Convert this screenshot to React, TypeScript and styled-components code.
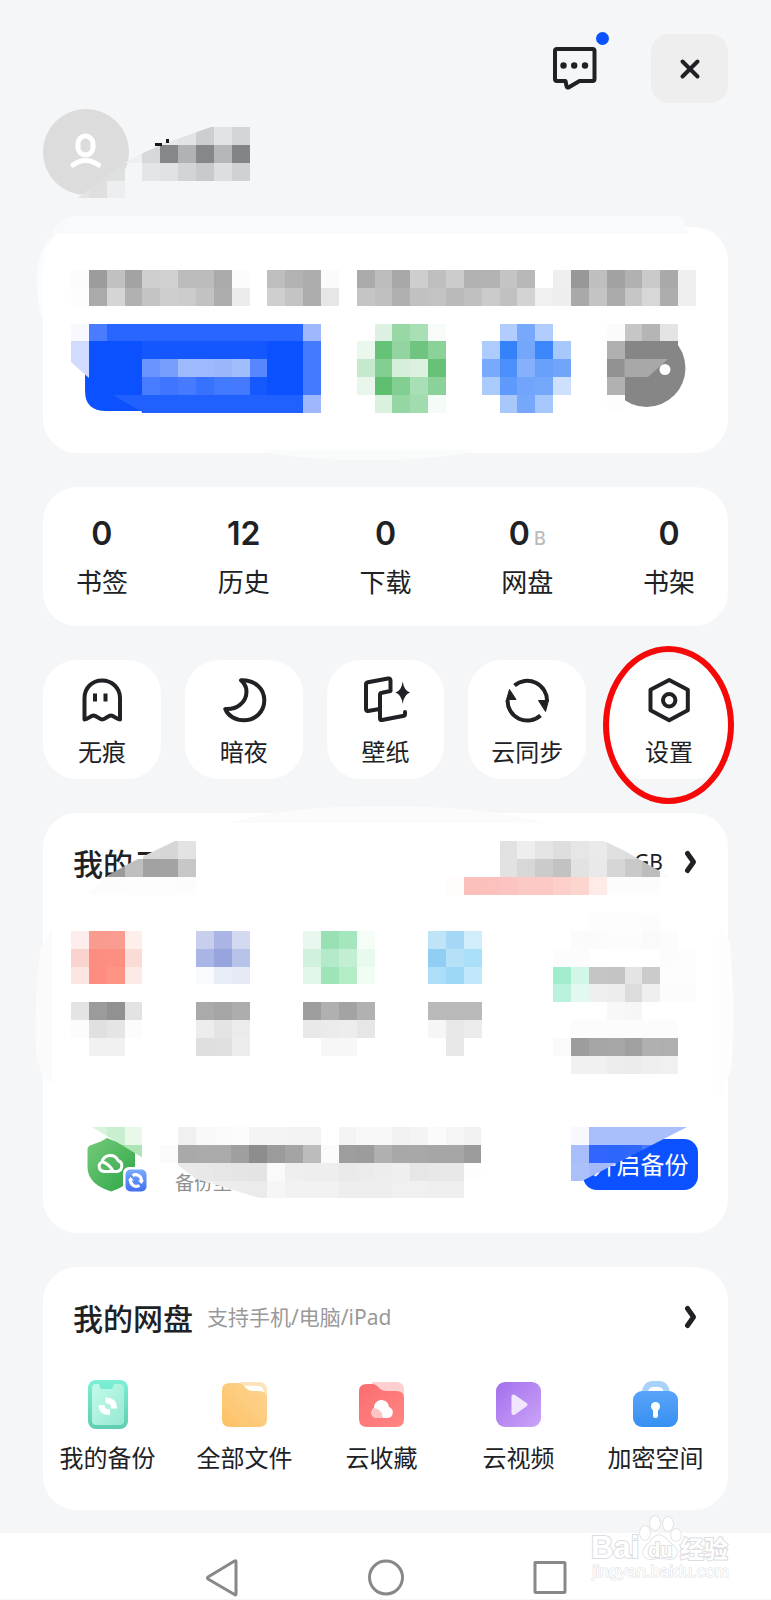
import React from "react";
import styled, { createGlobalStyle } from "styled-components";

const ink = "#202124";
const blue = "#0b51ff";

const GlobalStyle = createGlobalStyle`
  *, *::before, *::after { box-sizing: border-box; }
  body {
    margin: 0;
    background: #f4f6f8;
    color: ${ink};
    font-family: "Noto Sans", "Noto Sans CJK SC", sans-serif;
  }
  button { border: 0; padding: 0; margin: 0; background: none; color: inherit; font: inherit; cursor: pointer; }
  a { color: inherit; text-decoration: none; }
  h2, p { margin: 0; font-weight: 400; }
  svg { display: block; flex: none; overflow: visible; }
`;

/* ---------- layout ---------- */

const Screen = styled.div`
  position: relative;
  display: flex;
  flex-direction: column;
  overflow: hidden;
`;

const Content = styled.main`
  display: flex;
  flex-direction: column;
  gap: 34px;
  padding: 34px 43px 23px;
`;

const Header = styled.header`
  display: flex;
  flex-direction: column;
  gap: 6px;
  margin-bottom: -2px;
`;

const TopBar = styled.div`
  display: flex;
  align-items: center;
  justify-content: flex-end;
  gap: 54px;
`;

const MessageButton = styled.button`
  position: relative;
`;

const UnreadDot = styled.span`
  position: absolute;
  top: -15px;
  right: -12px;
  width: 13px;
  height: 13px;
  border-radius: 50%;
  background: ${blue};
`;

const CloseButton = styled.button`
  display: grid;
  place-items: center;
  width: 77px;
  height: 69px;
  border-radius: 18px;
  background: #eeeeee;
`;

const Profile = styled.div`
  position: relative;
  display: flex;
`;

const Avatar = styled.div`
  width: 86px;
  height: 86px;
  border-radius: 50%;
  background: #dcdcdc;
`;

const Cover = styled.div<{ $x: number; $y: number }>`
  position: absolute;
  left: ${(p) => p.$x}px;
  top: ${(p) => p.$y}px;
  pointer-events: none;
`;

const RightCover = styled(Cover)`
  left: auto;
  right: ${(p) => p.$x}px;
`;

const Card = styled.section<{ $pad: string }>`
  position: relative;
  border-radius: 34px;
  background: #ffffff;
  padding: ${(p) => p.$pad};
`;

const Columns = styled.div<{ $gap?: number }>`
  display: grid;
  grid-template-columns: repeat(5, 1fr);
  gap: ${(p) => p.$gap ?? 0}px;
`;

const Stat = styled.a`
  display: flex;
  flex-direction: column;
  align-items: center;
  gap: 10px;
`;

const StatValue = styled.span`
  display: flex;
  align-items: baseline;
  gap: 4px;
  height: 40px;
  font-family: Inter, "Noto Sans", sans-serif;
  font-size: 32px;
  line-height: 40px;
  font-weight: 600;
`;

const Unit = styled.small`
  font-size: 18px;
  line-height: 20px;
  font-weight: 500;
  color: #bbbbbb;
`;

const StatLabel = styled.span`
  font-size: 26px;
  line-height: 36px;
`;

const Tile = styled.button`
  position: relative;
  display: flex;
  flex-direction: column;
  align-items: center;
  gap: 12px;
  height: 119px;
  padding-top: 18px;
  border-radius: 34px;
  background: #ffffff;
`;

const Label = styled.span`
  font-size: 24px;
  line-height: 36px;
  white-space: nowrap;
`;

const Ring = styled.span`
  position: absolute;
  z-index: 1;
  top: -14px;
  left: 50%;
  width: 131px;
  height: 158px;
  margin-left: -66px;
  border: 6px solid #f50808;
  border-radius: 50%;
  pointer-events: none;
`;

const CardHead = styled.div`
  position: relative;
  display: flex;
  align-items: center;
  height: 40px;
`;

const Title = styled.h2`
  font-size: 30px;
  line-height: 40px;
  font-weight: 500;
`;

const CloudHead = styled(CardHead)`
  padding-left: 2px;
`;

const Hint = styled.span`
  margin: 0 0 4px 14px;
  font-size: 21px;
  line-height: 32px;
  color: #999999;
`;

const Quota = styled.span`
  margin: 0 0 4px auto;
  font-size: 21px;
  line-height: 32px;
`;

const More = styled.a<{ $gap?: number }>`
  margin: 0 2px 4px ${(p) => (p.$gap ? `${p.$gap}px` : "auto")};
`;

const Services = styled.div`
  margin: 29px 2px 0 0;
`;

const BackupRow = styled.div`
  position: relative;
  display: flex;
  align-items: center;
  height: 76px;
  margin-top: 53px;
  padding-left: 16px;
`;

const BackupNote = styled.p`
  align-self: flex-end;
  margin-left: 28px;
  font-size: 19px;
  line-height: 40px;
  color: #8f8f8f;
`;

const BackupButton = styled.button`
  margin-left: auto;
  width: 115px;
  height: 51px;
  border-radius: 14px;
  background: ${blue};
  color: #ffffff;
  font-size: 24px;
  line-height: 36px;
`;

const DriveHead = styled(CardHead)`
  padding: 0 30px;
`;

const DriveItem = styled.a`
  display: flex;
  flex-direction: column;
  align-items: center;
  gap: 10px;
`;

const DriveGrid = styled(Columns)`
  margin: 41px 4px 0 -4px;
`;

const NavBar = styled.nav`
  display: flex;
  justify-content: center;
  gap: 124px;
  height: 66px;
  padding-top: 23px;
  background: #ffffff;
`;

const Watermark = styled.div`
  position: absolute;
  right: 40px;
  bottom: 12px;
  pointer-events: none;
`;

/* ---------- pixel mosaics ---------- */

const CELL = 125 / 7;

/* Each row lists cell colours; "." is an empty cell and "colour*n" repeats. */
function expand(row: string): string[] {
  return row
    .trim()
    .split(/\s+/)
    .flatMap((token) => {
      const [value, count] = token.split("*");
      return Array<string>(Number(count ?? 1)).fill(value);
    });
}

type MosaicProps = {
  id: string;
  cols: number;
  rows: string[];
  clip?: string;
  fluid?: boolean;
  under?: React.ReactNode;
  over?: React.ReactNode;
};

function Mosaic({ id, cols, rows, clip, fluid, under, over }: MosaicProps) {
  const w = cols * CELL;
  const h = rows.length * CELL;
  return (
    <svg width={fluid ? "100%" : w} height={fluid ? undefined : h} viewBox={`0 0 ${w} ${h}`} aria-hidden="true">
      {clip && (
        <clipPath id={id}>
          <polygon points={clip} />
        </clipPath>
      )}
      {under}
      <g shapeRendering="crispEdges" clipPath={clip ? `url(#${id})` : undefined}>
        {rows.map((row, y) =>
          expand(row).map((c, x) =>
            c === "." ? null : (
              <rect key={`${x}-${y}`} x={x * CELL} y={y * CELL} width={CELL} height={CELL} fill={`#${c}`} />
            )
          )
        )}
      </g>
      {over}
    </svg>
  );
}

const nameRows = [
  ". . . . . e6e7e9 e2e3e5 cdced1 e2e3e5 d3d5d7",
  ". . . eeeff1 d7d8da 868788 b1b2b4 868788 b6b7b9 838485",
  ". dededf dedfdf . e4e5e7 e1e2e3 d3d4d6 c9cacc dddee0 cfd1d3",
  "e3e4e5 dfdfdf edeeef",
];

const memberRows = [
  "fcfcfc 9c9c9c c1c1c1 a3a3a3 cfcfcf d1d1d1 bcbcbc*2 aaaaaa fcfcfc . bebebe b3b3b3 adadad fbfbfb . aaaaaa bdbdbd a8a8a8 cecece bfbfbf cccccc b2b2b2 b3b3b3 c4c4c4 b8b8b8 . efefef 989898 bfbfbf a2a2a2 b1b1b1 cacaca a9a9a9 efefef",
  "fdfdfd aaaaaa d5d5d5 b1b1b1 c4c4c4 cecece cccccc c2c2c2 adadad ebebeb . cfcfcf c4c4c4 adadad e6e6e6 . c5c5c5 c0c0c0 b0b0b0 c1c1c1 c3c3c3 bababa c0c0c0 cbcbcb c1c1c1 d3d3d3 f0f0f0 eeeeee a9a9a9 c4c4c4 aaaaaa c6c6c6 d7d7d7 adadad efefef",
  ".",
  "f8f9fe 4a7cff 2966ff*11 9fb8fd . . . dcf1e1 97d8a4 a9dfb5 f7fcf9 . . . b0cdfd 77a8fb b0cdfd . . . fbfbfb c6c6c6 b5b5b5 e4e4e4",
  ". 0b51ff*3 1557ff*7 0b51ff*2 447aff . . eaf7ed 66c277 93d4a1 6fc580 8bd299 . . adccfd 3482f9 74a7fb 3c86fb a6c8fb . . b0b0b0 868686*3",
  ". 0b51ff*3 6a94fe 769efd 9fbafc*2 9bb7fb a2bdfb 5886fe 0b51ff*2 447aff . . c5e9cd 82cf91 d5efdb dcf1e0 65c277 . . 78a9fc 4b8ffa 85b1fc 68a1fb 71a5fb . . 919191",
  ". 0b51ff*3 487dff 4076ff 477bff 3672fe 417afe 467afe 1558fe 0b51ff*2 447aff . . e8f6ec 5fbf71 82cf91 a9dfb4 8ad299 . . accbfd 5e9afb 70a5fb 75a8fb cee0fe . . b1b1b1",
  ".*4 1f60ff*9 9fb8fd . . . daf1df 95d7a3 a1dcae f5fcf7 . . . a8c8fb 75a7fb a6c7fb . . . fdfdfd",
];

const serviceRows = [
  ".*29 fdfdfd*3 fcfcfc",
  "fdeded fa9b8f fb9c90 feeeec .*3 c8cfec aab5e5 d3d9f1 .*3 e9f8ef 99e0b3 a6e6bf f5fdf7 .*3 bfe4f7 a5d8f7 d1edfb .*5 fbfbfb*2 fcfcfc*2 fafafa fcfcfc",
  "fad3ce fd8d80 fd8f80 fbdbd6 .*3 a9b5e4 98a4de b8c3ea .*3 d0f1de b3eac9 c2efd2 e8f9ed .*3 91cef4 b4e0f8 a9dff9 .*4 fcfcfc*2 .*4 fcfcfc fdfdfd",
  "fbe6e3 fe8c80 fd9484 fdeae7 .*3 f8fafe e9edf8 e6eaf7 .*3 e3f6ea 9fe4b7 b3edc5 f1fcf5 .*3 addef8 9ed8f7 c1e8fa .*4 a0eccd d1f7e6 c5c5c5 c3c3c3 e4e4e4 cbcbcb fdfdfd*2",
  ".*27 baf2de e1f9f0 efefef ededed dcdcdc efefef fcfcfc*2",
  "e4e4e4 9b9b9b 919191 e3e3e3 .*3 aaaaaa a5a5a5 adadad .*3 9e9e9e b0b0b0 a3a3a3 b1b1b1 .*3 b9b9b9*3 .*7 f8f8f8 f6f6f6",
  "fcfcfc e0e0e0 e5e5e5 fcfcfc .*3 ededed e4e4e4 ebebeb .*3 e9e9e9 ebebeb ededed e6e6e6 .*3 f6f6f6 e8e8e8 ebebeb .*5 fcfcfc*6",
  ". f1f1f1*2 .*4 dfdfdf e0e0e0 ededed .*4 f7f7f7*2 .*5 e8e8e8 .*5 fafafa 9d9d9d a5a5a5 a7a7a7 a0a0a0 b0b0b0 afafaf",
  ".*28 f1f1f1*2 ededed ebebeb efefef f0f0f0",
];

const titleRows = [
  ". . . d8d8d8 d6d6d6 e3e3e3",
  ". 9a9a9a bfbfbf a2a2a2 a3a3a3 c7c7c7",
  "fcfcfc*2 fdfdfd*3 fcfcfc",
];

const quotaRows = [
  ".*3 e1e1e1 eeeeee e5e5e5 dedede e6e6e6 eaeaea e0e0e0 dddddd e0e0e0",
  ".*3 e2e2e2 d7d7d7 cbcbcb c2c2c2 e2e2e2 e9e9e9 d6d6d6 c9c9c9 bdbdbd fafafa",
  "fffcfb fcc0bc fcc1bd fcc4c0 fcc8c4*2 fccfca fdd5cf feebe8 fcfcfc*3",
];

const backupRows = [
  ". f0f0f0 f9f9f9 fafafa fcfcfc f4f4f4*2 f3f3f3*2 . f4f4f4 f8f8f8*2 f2f2f2 f4f4f4 fbfbfb f5f5f5 f2f2f2",
  "fbfbfb a9a9a9 aaaaaa*2 9f9f9f 8d8d8d 9b9b9b a4a4a4 bcbcbc fbfbfb 9e9e9e 9c9c9c b0b0b0 a8a8a8*2 a6a6a6*2 9b9b9b",
  ". e9e9e9 e8e8e8 e6e6e6 e5e5e5 e4e4e4 fafafa efefef eeeeee*2 eaeaea ebebeb ededed efefef e6e6e6 e8e8e8*2 fdfdfd",
  ". . f0f0f0 ededed ececec ebebeb f6f6f6 f2f2f2*3 eeeeee*3 f0f0f0*2 efefef*2",
];

const shieldRows = ["d7f3db*2 c8efcf e8f9ea", "c5eecb*2 9fdfa6 aee5b4"];

const actionRows = [
  "f7f9fe a9bffb*6",
  "a7bdfc 3066fe 2d66fb 3068fb 4a7bfb 3f72fb",
  "acc1fc a3b9fb a9bcfb a3b9fb",
];

/* ---------- icons ---------- */

const line = { fill: "none", stroke: ink, strokeWidth: 4, strokeLinejoin: "round", strokeLinecap: "round" } as const;

const tools: { name: string; marked?: boolean; art: React.ReactNode }[] = [
  {
    name: "无痕",
    art: (
      <>
        <path {...line} d="M4.500 41.500V20C4.500 10 12 2.500 22 2.500S40 10 40 20V41.500C36.500 41.500 34 37.500 31 37.500C28 37.500 25.500 41.500 22.300 41.500S16.500 37.500 13.500 37.500C10.500 37.500 8 41.500 4.500 41.500Z" />
        <path fill={ink} d="M13 15.500h4v8h-4zM23.500 15.500h4v8h-4z" />
      </>
    ),
  },
  {
    name: "暗夜",
    art: <path {...line} d="M19 2.300C33 1.700 42.300 11 42.300 22.300S33.500 42.300 22 42.300C13.500 42.300 6 38 3.300 31C14 32 24.500 25 24.500 13.500C24.500 9 22 5 19 2.300Z" />,
  },
  {
    name: "壁纸",
    art: (
      <>
        <path {...line} d="M16.500 31L5 33Q3 33.300 3 31V6.500Q3 4.700 5 4.300L25 .5Q27.500 0 27.500 2.500V13L19 14.700Q17 15 17 17V40.500Q17 42.500 19 42L41 37.700Q42 37.500 42 36V34" />
        <path fill={ink} d="M39.700 3.500Q41 12.500 47 14.500Q41 16.500 39.700 26Q38.500 16.500 32.500 14.500Q38.500 12.500 39.700 3.500Z" />
      </>
    ),
  },
  {
    name: "云同步",
    art: (
      <>
        <path {...line} strokeLinecap="butt" d="M9.500 7.500A19.700 19.700 0 0 1 42 23M35.500 37.500A19.700 19.700 0 0 1 2.600 22" />
        <path fill={ink} stroke={ink} strokeLinejoin="round" d="M33.500 22.500H43.500L40.500 33.500ZM11 21.500H1.500L4.500 11.500Z" />
      </>
    ),
  },
  {
    name: "设置",
    marked: true,
    art: (
      <>
        <path {...line} d="M22.200 2L40.800 11.800V32.200L22.200 42.200L3.500 32.200V11.800Z" />
        <circle {...line} cx="22.200" cy="22.200" r="6.200" />
      </>
    ),
  },
];

const driveItems: { name: string; art: React.ReactNode }[] = [
  {
    name: "我的备份",
    art: (
      <>
        <linearGradient id="phone" x2="0" y2="1">
          <stop stopColor="#7cf0d5" />
          <stop offset="1" stopColor="#5fcdb0" />
        </linearGradient>
        <linearGradient id="glass" x2="1" y2="1">
          <stop stopColor="#c4faeb" />
          <stop offset="1" stopColor="#96e8d2" />
        </linearGradient>
        <rect x="5" width="40" height="49" rx="8" fill="url(#phone)" />
        <path fill="url(#glass)" d="M13 4H16Q17 9 19 9H28Q30 9 31 4H37Q41 4 41 8V41Q41 45 37 45H13Q9 45 9 41V8Q9 4 13 4Z" />
        <path fill="none" stroke="#fff" strokeWidth="6" d="M22.500 20.500Q31 20 31 28.500M18.500 25Q18.500 32.500 27 32" />
      </>
    ),
  },
  {
    name: "全部文件",
    art: (
      <>
        <linearGradient id="folder" x1="1" x2="0" y2="1">
          <stop stopColor="#fcd593" />
          <stop offset="1" stopColor="#fec165" />
        </linearGradient>
        <path fill="#fde4bd" d="M20 2H39Q47 2 47 10V24H20Z" />
        <path fill="#fff" d="M24 6H38Q43 6 44 12H28Z" />
        <path fill="url(#folder)" d="M10 3H18Q22 3 25 7Q28 11 33 11H39Q47 11 47 18V39Q47 47 39 47H10Q2 47 2 39V10Q2 3 10 3Z" />
      </>
    ),
  },
  {
    name: "云收藏",
    art: (
      <>
        <linearGradient id="fav" x2="1" y2="1">
          <stop stopColor="#fb6d71" />
          <stop offset="1" stopColor="#ff8683" />
        </linearGradient>
        <path fill="#fdd0cf" d="M15 2H39Q47 2 47 10V24H15Z" />
        <path fill="url(#fav)" d="M10 4H15Q19 4 22 8Q25 11 30 11H39Q47 11 47 18V39Q47 47 39 47H10Q2 47 2 39V11Q2 4 10 4Z" />
        <path fill="#fff" d="M19 38A5.500 5.500 0 0 1 17 28A7.500 7.500 0 0 1 32 27A5.700 5.700 0 0 1 31 38Z" />
        <path fill="#fdc4c5" d="M26 38Q25 29 17 28A5.500 5.500 0 0 0 19 38Z" />
      </>
    ),
  },
  {
    name: "云视频",
    art: (
      <>
        <linearGradient id="video" x2="1" y2="1">
          <stop stopColor="#a36fec" />
          <stop offset="1" stopColor="#cba4f8" />
        </linearGradient>
        <rect x="2" y="2" width="45" height="45" rx="9" fill="url(#video)" />
        <path fill="#f1e6fd" stroke="#f1e6fd" strokeWidth="4" strokeLinejoin="round" d="M19.500 16.500V33L31.500 24.700Z" />
      </>
    ),
  },
  {
    name: "加密空间",
    art: (
      <>
        <linearGradient id="safe" x2="0" y2="1">
          <stop stopColor="#59a4fb" />
          <stop offset="1" stopColor="#3690f0" />
        </linearGradient>
        <path fill="none" stroke="#a8d1fb" strokeWidth="6" d="M13.500 14Q14.500 4 22 4H28Q35 4 36 14" />
        <rect x="2" y="11" width="45" height="36" rx="9" fill="url(#safe)" />
        <path fill="none" stroke="#fff" strokeWidth="5" strokeLinecap="round" d="M24.500 27V35.500" />
        <circle cx="24.500" cy="26.500" r="4.500" fill="#fff" />
      </>
    ),
  },
];

const stats = [
  { name: "书签", value: "0" },
  { name: "历史", value: "12" },
  { name: "下载", value: "0" },
  { name: "网盘", value: "0", unit: "B" },
  { name: "书架", value: "0" },
];

function Chevron() {
  return (
    <svg width="11" height="22" aria-hidden="true">
      <path {...line} strokeWidth="5" d="M2.500 2.500L8.500 11L2.500 19.500" />
    </svg>
  );
}

function BackupShield() {
  return (
    <svg width="60" height="56" viewBox="0 0 60 56" aria-hidden="true">
      <linearGradient id="shield" x2="1" y2="1">
        <stop stopColor="#76cb7b" />
        <stop offset="1" stopColor="#2ca545" />
      </linearGradient>
      <linearGradient id="badge" x2="0" y2="1">
        <stop stopColor="#78aafd" />
        <stop offset="1" stopColor="#416ff0" />
      </linearGradient>
      <path fill="url(#shield)" d="M20 1Q24 3 46 10Q48 11 48 13V28Q48 47 24 54.500Q.5 47 .5 30V12Q.5 9.500 3 8.500Q16 4 20 1Z" />
      <path fill="none" stroke="#fff" strokeWidth="3" strokeLinejoin="round" d="M17 34.500A5 5 0 0 1 15 25A8.500 8.500 0 0 1 31 23.500A5.700 5.700 0 0 1 30 34.500ZM16 25Q22 27 26 34" />
      <rect x="36" y="30" width="26" height="27" rx="6" fill="#fff" />
      <rect x="38.500" y="32.500" width="21" height="22" rx="5" fill="url(#badge)" />
      <path fill="none" stroke="#fff" strokeWidth="3" d="M45.500 38.500A6 6 0 0 1 54.500 44M52.500 48.500A6 6 0 0 1 43.500 43" />
      <path fill="#fff" d="M51 43.500H57L54.500 47ZM41 43.500H47L43.500 40Z" />
    </svg>
  );
}

function Watermarks() {
  const outline = { fill: "#fff", stroke: "#dcdddf", strokeWidth: 2, paintOrder: "stroke" } as const;
  return (
    <svg width="140" height="72" viewBox="0 0 140 72" role="img" aria-label="Baidu 经验">
      <g {...outline} strokeWidth="1.500">
        <ellipse cx="54" cy="18" rx="5" ry="7" />
        <ellipse cx="64" cy="8" rx="5" ry="7" />
        <ellipse cx="77" cy="9" rx="5" ry="7" />
        <ellipse cx="85" cy="20" rx="5" ry="6" />
        <path d="M68 20Q72 20 78 27Q87 33 86 39Q84 45 77 44Q69 42 62 44Q53 45 52 38Q52 33 59 27Q64 20 68 20Z" />
      </g>
      <g {...outline} fontFamily="Liberation Sans, sans-serif" fontWeight="700">
        <text x="0" y="43" fontSize="31">Bai</text>
        <text x="57" y="42" fontSize="20">du</text>
        <text x="89" y="43" fontSize="24" fontFamily="Noto Sans CJK SC, sans-serif">经验</text>
      </g>
      <text {...outline} strokeWidth="1" x="1" y="62" fontSize="17" fontFamily="Liberation Sans, sans-serif">jingyan.baidu.com</text>
    </svg>
  );
}

/* ---------- page ---------- */

export default function App() {
  return (
    <Screen>
      <GlobalStyle />
      <Content>
        <Header>
          <TopBar>
            <MessageButton aria-label="消息">
              <svg width="44" height="43" aria-hidden="true">
                <path {...line} d="M4 2H39.500Q41.500 2 41.500 4V32Q41.500 34 39.500 34H26.500L15.500 40.500Q14 41 13.500 39L12.500 34H4Q2 34 2 32V4Q2 2 4 2Z" />
                <g fill={ink}>
                  <circle cx="10.500" cy="18.500" r="3.200" />
                  <circle cx="21.200" cy="18.500" r="3.200" />
                  <circle cx="32" cy="18.500" r="3.200" />
                </g>
              </svg>
              <UnreadDot />
            </MessageButton>
            <CloseButton aria-label="关闭">
              <svg width="20" height="20" aria-hidden="true">
                <path {...line} d="M2.500 2.500L17.500 17.500M17.500 2.500L2.500 17.500" />
              </svg>
            </CloseButton>
          </TopBar>
          <Profile>
            <Avatar>
              <svg width="86" height="86" aria-hidden="true">
                <g fill="none" stroke="#fff" strokeWidth="5" strokeLinecap="round">
                  <rect x="35" y="27" width="15" height="19" rx="7.500" />
                  <path d="M30 56Q42.500 47 55.500 56" />
                </g>
              </svg>
            </Avatar>
            <Cover $x={28} $y={18}>
              <Mosaic
                id="name"
                cols={10}
                rows={nameRows}
                clip="140,0 179,0 179,54 54,54 54,72 5,72 55,35 72,26 92,17"
                over={<path fill="#17181a" d="M84 16h7v3h-7zM95 12h3v4h-3z" />}
              />
            </Cover>
          </Profile>
        </Header>

        <Card $pad="43px 32px 40px 28px">
          <Cover $x={0} $y={0}>
            <svg width="685" height="226" aria-hidden="true">
              <path fill="#f9fafc" d="M17 -4Q24 -11 36 -11H634Q642 -10 642 0L646 7H9Q10 2 17 -4Z" />
              <path fill="#fbfcfd" d="M9 7Q-6 25 -6 52T0 92V60Q0 20 9 7Z" />
              <path fill="#fafbfb" d="M215 223H436Q400 233 325 233T215 223Z" />
            </svg>
          </Cover>
          <Mosaic
            id="member"
            cols={35}
            rows={memberRows}
            fluid
            under={
              <>
                <path fill={blue} d="M14 104V121Q14 141 35 141H73V104Z" />
                <path fill="#1f60ff" d="M42 125H73V143Z" />
                <path fill="#cfdcfd" d="M0 71H18V108L0 92Z" />
                <circle cx="575.500" cy="98" r="39" fill="#868686" />
              </>
            }
            over={
              <>
                <path fill="#a8a8a8" d="M553.500 89H597L577 107H553.500Z" />
                <circle cx="594" cy="99.500" r="5.500" fill="#fff" />
              </>
            }
          />
        </Card>

        <Card $pad="27px 0 26px">
          <Columns $gap={24}>
            {stats.map((s) => (
              <Stat key={s.name} href="#">
                <StatValue>
                  {s.value}
                  {s.unit && <Unit>{s.unit}</Unit>}
                </StatValue>
                <StatLabel>{s.name}</StatLabel>
              </Stat>
            ))}
          </Columns>
        </Card>

        <Columns $gap={24}>
          {tools.map((t) => (
            <Tile key={t.name}>
              <svg width="44" height="44" aria-hidden="true">{t.art}</svg>
              <Label>{t.name}</Label>
              {t.marked && <Ring />}
            </Tile>
          ))}
        </Columns>

        <Card $pad="31px 30px 30px 28px">
          <Cover $x={0} $y={0}>
            <svg width="685" height="420" aria-hidden="true">
              <path fill="#fbfbfc" d="M187 10Q240 -7 340 -7T503 10Z" />
              <path fill="#fbfbfc" d="M9 115L-2 135Q-9 180 -7 240Q-5 255 2 265L9 270Z" />
              <path fill="#fdfdfd" d="M676 115L687 130Q692 180 689 250Q688 262 676 285Z" />
            </svg>
          </Cover>
          <CloudHead>
            <Title>我的云</Title>
            <Quota>GB</Quota>
            <More href="#" $gap={22} aria-label="查看更多">
              <Chevron />
            </More>
            <Cover $x={18} $y={-3}>
              <Mosaic id="title" cols={6} rows={titleRows} clip="86,0 107,0 107,54 -4,54 18,35 41,22 61,12" />
            </Cover>
            <RightCover $x={20} $y={-3}>
              <Mosaic id="quota" cols={13} rows={quotaRows} clip="0,0 158,0 177,9 224,36 213,54 0,54" />
            </RightCover>
          </CloudHead>
          <Services>
            <Mosaic id="services" cols={35} rows={serviceRows} fluid />
          </Services>
          <BackupRow>
            <BackupShield />
            <BackupNote>备份至</BackupNote>
            <BackupButton>开启备份</BackupButton>
            <Cover $x={0} $y={0}>
              <Mosaic id="shield-cover" cols={4} rows={shieldRows} clip="21,0 72,0 72,31" />
            </Cover>
            <Cover $x={89} $y={0}>
              <Mosaic
                id="backup"
                cols={18}
                rows={backupRows}
                clip="0,0 322,0 322,72 107,72 96,70 70,62 36,52 18,38 0,36"
              />
            </Cover>
            <RightCover $x={2} $y={0}>
              <Mosaic id="action" cols={7} rows={actionRows} clip="0,0 116,0 13,53 0,57" />
            </RightCover>
          </BackupRow>
        </Card>

        <Card $pad="32px 0 34px">
          <DriveHead>
            <Title>我的网盘</Title>
            <Hint>支持手机/电脑/iPad</Hint>
            <More href="#" aria-label="查看网盘">
              <Chevron />
            </More>
          </DriveHead>
          <DriveGrid>
            {driveItems.map((d) => (
              <DriveItem key={d.name} href="#">
                <svg width="49" height="50" aria-hidden="true">{d.art}</svg>
                <Label>{d.name}</Label>
              </DriveItem>
            ))}
          </DriveGrid>
        </Card>
      </Content>

      <NavBar>
        {[
          { name: "返回", d: "M34 5V37Q34 38.500 32.500 37.500L6 22Q5 21 6 20L32.500 4Q34 3 34 5Z" },
          { name: "主页", d: "M20 4A16.500 16.500 0 0 1 20 37A16.500 16.500 0 0 1 20 4Z" },
          { name: "最近任务", d: "M5 5.500H34Q35 5.500 35 6.500V34.500Q35 35.500 34 35.500H6Q5 35.500 5 34.500Z" },
        ].map((n) => (
          <button key={n.name} aria-label={n.name}>
            <svg width="40" height="40" aria-hidden="true">
              <path d={n.d} fill="none" stroke="#888888" strokeWidth="3" strokeLinejoin="round" />
            </svg>
          </button>
        ))}
      </NavBar>
      <Watermark>
        <Watermarks />
      </Watermark>
    </Screen>
  );
}
